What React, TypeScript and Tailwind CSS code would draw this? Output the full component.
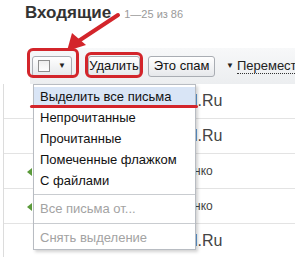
import React from 'react';

const rows = [
  { text: 'l.Ru', mark: false },
  { text: 'l.Ru', mark: false },
  { text: 'нко', mark: true },
  { text: 'нко', mark: true },
  { text: 'l.Ru', mark: false },
];

const menuTop = [
  'Непрочитанные',
  'Прочитанные',
  'Помеченные флажком',
  'С файлами',
];

const btn =
  'shrink-0 whitespace-nowrap h-[21px] flex items-center justify-center rounded-[3px] border border-[#a9adb3] bg-gradient-to-b from-white to-[#e6e8eb] text-[13px] text-[#111]';

export default function App() {
  return (
    <div className="relative w-[295px] h-[257px] overflow-hidden bg-white font-['Liberation_Sans',Arial,sans-serif]">
      {/* header */}
      <div className="flex items-baseline pl-[25px] pt-[2px] h-[48px]">
        <h1 className="text-[17px] font-bold text-[#333] leading-[22px]">Входящие</h1>
        <span className="ml-[13px] text-[11px] text-[#9a9a9a]">1—25 из 86</span>
      </div>

      {/* toolbar */}
      <div className="ml-[30px] h-[36px] flex items-center pl-[2px] overflow-hidden bg-gradient-to-b from-[#f7f8f9] to-[#eceef0]">
        <div className={`${btn} w-[40px] gap-[8px]`}>
          <span className="w-[12px] h-[12px] border border-[#8f8f8f] bg-gradient-to-b from-[#eeeeee] to-white" />
          <span className="text-[8px] text-[#222]">▼</span>
        </div>
        <div className={`${btn} ml-[16px] w-[52px]`}>Удалить</div>
        <div className={`${btn} ml-[8px] w-[67px]`}>Это спам</div>
        <div className="ml-[11px] shrink-0 flex items-center gap-[3px] text-[13px] text-[#222]">
          <span className="text-[8px]">▼</span>
          <span className="border-b border-dotted border-[#333] leading-[14px] whitespace-nowrap">Переместить</span>
        </div>
      </div>

      {/* list rows behind the menu */}
      <div className="border-l border-[#dcdcdc] ml-[3px]">
        {rows.map((r, i) => (
          <div key={i} className="relative h-[35px] border-b border-[#e3e3e3] flex items-center">
            {r.mark && (
              <span className="absolute left-[23px] top-[14px] w-0 h-0 border-y-[4px] border-y-transparent border-r-[5px] border-r-[#5a9a3a]" />
            )}
            <span className={`ml-[190px] text-[#444] ${r.text === 'нко' ? 'text-[12px]' : 'text-[16px]'}`}>{r.text}</span>
          </div>
        ))}
      </div>

      {/* dropdown */}
      <div className="absolute left-[33px] top-[84px] w-[163px] h-[166px] bg-white border border-[#b8bcc2] shadow-[2px_2px_3px_rgba(0,0,0,0.18)] text-[13px]">
        <div className="mt-[2px] h-[20px] flex items-center pl-[6px] bg-[#d9e5f6] text-[#111]">Выделить все письма</div>
        {menuTop.map((t) => (
          <div key={t} className="h-[21px] flex items-center pl-[6px] text-[#111]">{t}</div>
        ))}
        <div className="mt-[3px] border-t border-[#c9ccd0]" />
        <div className="h-[28px] flex items-center pl-[6px] text-[#a3a3a3]">Все письма от...</div>
        <div className="border-t border-[#c9ccd0]" />
        <div className="h-[27px] flex items-center pl-[6px] text-[#a3a3a3]">Снять выделение</div>
      </div>

      {/* annotations */}
      <div className="absolute left-[27px] top-[48px] w-[52px] h-[30px] border-[3px] border-[#d3252b] rounded-[6px]" />
      <div className="absolute left-[85px] top-[52px] w-[58px] h-[26px] border-[3px] border-[#d3252b] rounded-[6px]" />
      <div className="absolute left-[30px] top-[105px] w-[168px] h-[3px] rounded-full bg-[#d3252b]" />
      <svg className="absolute left-0 top-0" width="295" height="257">
        <line x1="118" y1="15" x2="74" y2="44" stroke="#d3252b" strokeWidth="4" strokeLinecap="round" />
        <polygon points="67,51 72,33 86,45" fill="#d3252b" />
      </svg>
    </div>
  );
}
